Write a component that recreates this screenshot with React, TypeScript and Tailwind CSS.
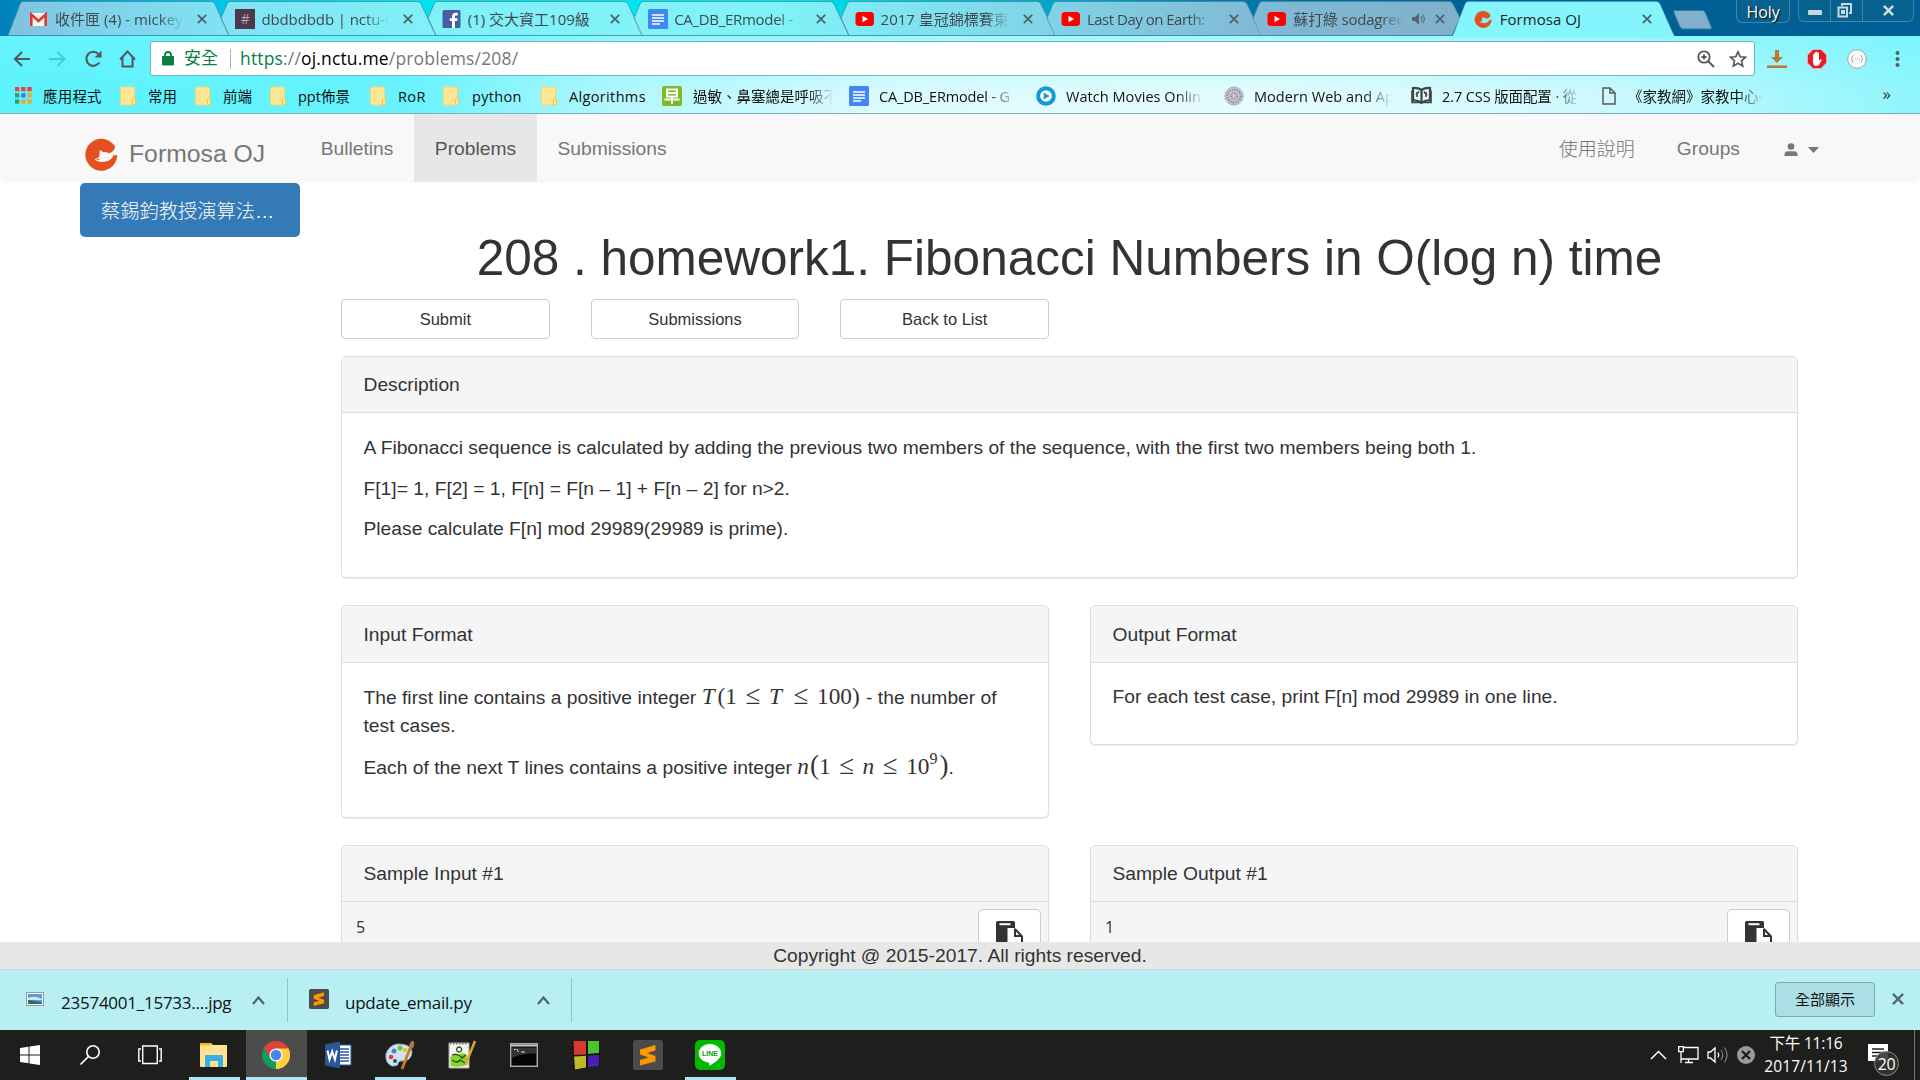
import React from 'react';

const UI = "font-['Open_Sans','Noto_Sans_CJK_TC',sans-serif]";

/* ---------- small drawings ---------- */

const YouTube = () => (
  <svg width="20" height="20" viewBox="0 0 20 20"><rect x="0.5" y="3" width="18.5" height="14" rx="3.5" fill="#f00" /><path d="M7.5 6.8v6.4l5.5-3.2z" fill="#fff" /></svg>
);
const Docs = () => (
  <svg width="20" height="20" viewBox="0 0 20 20"><rect width="20" height="20" rx="1.5" fill="#4285f4" /><path d="M4 6h12M4 9h12M4 12h12M4 15h8" stroke="#fff" strokeWidth="1.4" /></svg>
);
const Gmail = () => (
  <svg width="20" height="20" viewBox="0 0 20 20"><rect x="1" y="4" width="17" height="13" rx="1" fill="#f4f4f4" /><path d="M2.3 17V5.5L9.5 12l7.2-6.500V17" fill="none" stroke="#e0392b" strokeWidth="2.6" /></svg>
);
const Slack = () => (
  <span className="flex size-5 items-center justify-center bg-[#4d394b] text-[14px] leading-5 text-[#b9a5b7]">#</span>
);
const Facebook = () => (
  <svg width="20" height="20" viewBox="0 0 20 20"><rect x="0.500" y="1" width="18" height="18" rx="1.500" fill="#4460a0" /><path d="M10 19v-7H7.700V9.200H10V7.300C10 4.900 11.500 3.700 13.700 3.700h2v2.800h-1.400c-1.100 0-1.400.5-1.400 1.300v1.400h2.700l-.4 2.800h-2.300V19z" fill="#fff" /></svg>
);
const Formosa = ({ size }: { size: number }) => (
  <svg width={size} height={size} viewBox="0 0 34 34">
    <path d="M31 9.500A16 16 0 1 0 33.300 18.300L29.500 18.300C28 22.500 23.500 25 18.500 25c-4-.2-7-1.500-8-2.800 1.500-.4 3.500-1 4.500-2.200.8-1.500.3-3.500 1-7 1.200.5 2.500 1.800 3.700 2.200l2.800-.2c1 .8 2 1.500 3.500 1C28.500 15 31 12.500 31 9.500z" fill="#e2511f" />
    <path d="M11 21.500c2 .8 4 .6 5.500-.3-1 1.800-3 2.500-5.500.3z" fill="#e2511f" />
  </svg>
);
const Folder = () => (
  <svg width="17" height="20" viewBox="0 0 17 20"><path d="M1.500 1h12a1 1 0 0 1 1 1v16a1 1 0 0 1-1 1h-12a1 1 0 0 1-1-1V2a1 1 0 0 1 1-1z" fill="#ffe694" stroke="#f3d678" /><path d="M12.500 18.500v-5.500l1.500-1.200 1.500 1.200v4.500q0 1-1 1z" fill="#ffe694" stroke="#eec64c" /></svg>
);
const Apps = () => (
  <svg width="17" height="17" viewBox="0 0 17 17">
    {['#ea4335', '#ea4335', '#ea4335', '#34a060', '#2f80ed', '#f4a825', '#34a060', '#f4a825', '#f4a825'].map((c, i) => (
      <rect key={i} x={(i % 3) * 6.200} y={Math.floor(i / 3) * 6.200} width="4.300" height="4.300" fill={c} />
    ))}
  </svg>
);
const Zao = () => (
  <svg width="20" height="20" viewBox="0 0 20 20"><rect width="20" height="20" rx="2" fill="#7fb927" /><path d="M5 3.500h10v7H5zM5 7h10M2.500 13.500h15M10 10.500V18" fill="none" stroke="#fff" strokeWidth="2" /></svg>
);
const Watch = () => (
  <svg width="20" height="20" viewBox="0 0 20 20"><circle cx="10" cy="10" r="7.800" fill="#fff" stroke="#1598d6" strokeWidth="4" /><path d="M7.700 6.500v7l6-3.500z" fill="#1598d6" /></svg>
);
const Seal = () => (
  <svg width="20" height="20" viewBox="0 0 20 20" fill="none" stroke="#8e8a9c"><circle cx="10" cy="10" r="9" fill="#c9c6d3" strokeDasharray="2 1" /><circle cx="10" cy="10" r="6.500" strokeWidth="2" strokeDasharray="1.500 1" /><circle cx="10" cy="10" r="3" strokeWidth="2" strokeDasharray="1 1" /></svg>
);
const Book = () => (
  <svg width="21" height="20" viewBox="0 0 21 20" fill="none" stroke="#444" strokeWidth="2.200"><path d="M10.500 4Q7 1.500 2 2v12.500q5-.5 8.500 2.500 3.500-3 8.500-2.500V2q-5-.5-8.500 2zM10.500 4v13" /><path d="M1 4.500v12h8M20 4.500v12h-8M6 6v5M8 5.500 5 9M15 6v5M13 5.500l3 4" strokeWidth="1.600" /></svg>
);
const Page = () => (
  <svg width="14" height="18" viewBox="0 0 14 18" fill="none" stroke="#5a5a5a" strokeWidth="1.500"><path d="M1 1h7l5 5v11H1zM8 1v5h5" /></svg>
);
const Cross = ({ size, color, width = 1.700 }: { size: number; color: string; width?: number }) => (
  <svg width={size} height={size} viewBox="0 0 10 10"><path d="M.8.8l8.400 8.400M9.200.8.8 9.200" stroke={color} strokeWidth={width} /></svg>
);
const Chevron = ({ w, h, color, sw }: { w: number; h: number; color: string; sw: number }) => (
  <svg width={w} height={h} viewBox={`0 0 ${w} ${h}`}><path d={`M1 ${h - 1}L${w / 2} 1.500 ${w - 1} ${h - 1}`} fill="none" stroke={color} strokeWidth={sw} /></svg>
);
const Sublime = ({ size }: { size: number }) => (
  <svg width={size} height={size} viewBox="0 0 30 30"><rect width="30" height="30" rx="2.500" fill="#4b4b4b" /><path d="M7 9.500 22.500 5v5.500L14 13l8.500 3v5.500L7 25.500V20l8.500-2.500L7 14.500z" fill="#ff9800" /></svg>
);

/* ---------- tab strip ---------- */

const fade = '[mask-image:linear-gradient(to_right,#000_78%,transparent_98%)]';

const tabs = [
  { icon: <Gmail />, text: '收件匣 (4) - mickey', cls: 'tracking-[0px]' },
  { icon: <Slack />, text: 'dbdbdbdb | nctu-c', cls: 'tracking-[-0.1px]' },
  { icon: <Facebook />, text: '(1) 交大資工109級', cls: 'tracking-[0px]' },
  { icon: <Docs />, text: 'CA_DB_ERmodel -', cls: 'tracking-[-0.3px]' },
  { icon: <YouTube />, text: '2017 皇冠錦標賽東', cls: 'tracking-[0px]' },
  { icon: <YouTube />, text: 'Last Day on Earth:', cls: 'tracking-[-0.5px]' },
  { icon: <YouTube />, text: '蘇打綠 sodagree', cls: 'tracking-[-0.2px]', audio: true },
  { icon: <Formosa size={18} />, text: 'Formosa OJ', cls: 'tracking-[0.05px]', active: true },
];

function tabPath(i: number) {
  if (i === 0 || i === 7) return 'M0 35.500 L12 4 Q13 1.500 15 1.500 H203 Q206 1.500 207 4 L221 35.500 Z';
  if (i === 6) return 'M7 18 L13 4 Q14 1.500 16 1.500 H203 Q206 1.500 207 4 L214 18 L206 35.500 H15 Z';
  return 'M7 18 L13 4 Q14 1.500 16 1.500 H203 Q206 1.500 207 4 L222 35.500 H15 Z';
}

function TabStrip() {
  return (
    <div className="flex h-9 bg-[linear-gradient(to_right,#0080bb_0,#009fd2_80px,#00c4e8_220px,#00e2f0_420px,#00e6f0_780px,#00c8e2_900px,#00a0c8_1080px,#0073a8_1260px,#006298_1460px,#005f94_100%)] pl-2">
      {tabs.map((t, i) => (
        <div key={i} className="relative h-9 w-[206.4px] shrink-0">
          <svg className="absolute left-0 top-0 overflow-visible" width="222" height="36" viewBox="0 0 222 36">
            <path d={tabPath(i)} fill={t.active ? '#84f5fd' : '#ffffff'} fillOpacity={t.active ? 1 : 0.5} stroke="#3f8799" strokeOpacity={t.active ? 0.3 : 0.75} />
            {t.active && <path d="M0 34h221v3H0z" fill="#84f5fd" />}
          </svg>
          <div className="relative flex h-9 items-center pl-[21px] pt-px">
            <span className="flex w-[26px] shrink-0 pt-px">{t.icon}</span>
            <span className={`shrink-0 overflow-hidden whitespace-nowrap text-[15px] leading-6 ${t.audio ? 'w-[113px]' : 'w-[132px]'} ${t.active ? 'text-[#222]' : 'text-[#3f4a50]'} ${t.active || i === 2 ? '' : fade} ${t.cls}`}>{t.text}</span>
            {t.audio && (
              <svg className="ml-1.5 shrink-0" width="14" height="12" viewBox="0 0 14 12"><path d="M0 4h3l4-4v12L3 8H0z" fill="#55666f" /><path d="M9 3q2 3 0 6M11 1.500q3 4.500 0 9" stroke="#55666f" fill="none" /></svg>
            )}
            <span className={t.audio ? 'ml-[9px] pt-px' : 'ml-[10px] pt-px'}><Cross size={10} color="#4c6068" /></span>
          </div>
        </div>
      ))}
      <svg className="ml-[13px] mt-2.5 shrink-0" width="42" height="20" viewBox="0 0 42 20"><path d="M3 .5h27q2.500 0 3.300 2l6.200 15q.7 1.500-1.500 1.500H11q-2 0-3-2L2 3Q1 .5 3 .5z" fill="#82afc9" stroke="#35799c" /></svg>
      <div className="ml-[22px] flex h-[23px] w-[54px] items-center justify-center rounded-b-md border border-t-0 border-[#3f86ad] bg-[#07618f] text-[16px] leading-5 text-white [text-shadow:1px_1px_1px_#000]">
        <span className="pt-0.5">Holy</span>
      </div>
      <div className="ml-2 flex h-[22px] w-[116px] rounded-b-md border border-t-0 border-[#3f86ad] bg-[#07618f]">
        <span className="flex w-8 items-center justify-center border-r border-[#3f86ad] pt-1"><span className="h-[5px] w-3.5 rounded-[1px] bg-[#c4d6e0]" /></span>
        <span className="flex w-8 items-center justify-center border-r border-[#3f86ad] pr-1">
          <svg width="15" height="15" viewBox="0 0 15 15" fill="none" stroke="#c9d9e2" strokeWidth="2"><path d="M5 3V1h9v9h-2" /><path d="M1.500 4.500h8.500v9H1.500zM5 8h2v2H5z" /></svg>
        </span>
        <span className="flex flex-1 items-center justify-center"><Cross size={11} color="#cfdde5" width={2.200} /></span>
      </div>
    </div>
  );
}

/* ---------- toolbar and bookmarks ---------- */

const bookmarks = [
  { icon: <Apps />, iw: 'w-7', w: 'w-[77px]', text: '應用程式', cls: 'tracking-[0.2px]' },
  { icon: <Folder />, iw: 'w-7', w: 'w-[47px]', text: '常用', cls: '' },
  { icon: <Folder />, iw: 'w-7', w: 'w-[47px]', text: '前端', cls: '' },
  { icon: <Folder />, iw: 'w-7', w: 'w-[72px]', text: 'ppt佈景', cls: '' },
  { icon: <Folder />, iw: 'w-7', w: 'w-[45px]', text: 'RoR', cls: 'tracking-[0.4px]' },
  { icon: <Folder />, iw: 'w-[29px]', w: 'w-[69px]', text: 'python', cls: 'tracking-[0.3px]' },
  { icon: <Folder />, iw: 'w-7', w: 'w-[93px]', text: 'Algorithms', cls: 'tracking-[0.35px]' },
  { icon: <Zao />, iw: 'w-[31px]', w: 'w-[146px] mr-[10px]', text: '過敏、鼻塞總是呼吸不', cls: '[mask-image:linear-gradient(to_right,#000_78%,transparent_96%)]' },
  { icon: <Docs />, iw: 'w-[30px]', w: 'w-[141px] mr-4', text: 'CA_DB_ERmodel - G', cls: `${fade} tracking-[-0.15px]` },
  { icon: <Watch />, iw: 'w-[30px]', w: 'w-[141px] mr-[17px]', text: 'Watch Movies Onlin', cls: `${fade} tracking-[0.05px]` },
  { icon: <Seal />, iw: 'w-[30px]', w: 'w-[141px] mr-4', text: 'Modern Web and Ap', cls: `${fade} tracking-[0.05px]` },
  { icon: <Book />, iw: 'w-[31px]', w: 'w-[142px] mr-[18px]', text: '2.7 CSS 版面配置 · 從', cls: `${fade} tracking-[-0.1px]` },
  { icon: <Page />, iw: 'w-[26px]', w: 'w-[140px]', text: '《家教網》家教中心-', cls: fade },
];

function Toolbar() {
  return (
    <div className="h-[78px] border-b border-[#7fb0b8] bg-[linear-gradient(to_bottom,rgba(110,244,254,0.55),rgba(255,255,255,0)_75%),linear-gradient(to_right,#5cf3fd_0,#66f3fd_400px,#b4f7fd_620px,#dcfbfe_900px,#e6fcfe_1250px,#cdf9fe_1600px,#8ff5fd_1920px)]">
      <div className="flex h-[45px] items-center pl-[13px]">
        <svg width="18" height="16" viewBox="0 0 18 16" fill="none" stroke="#4f5b5e" strokeWidth="2.100"><path d="M17 8H2M9 1 2 8l7 7" /></svg>
        <svg className="ml-[18px]" width="18" height="16" viewBox="0 0 18 16" fill="none" stroke="#35d0dc" strokeWidth="1.800"><path d="M0 8h15.500M8.500 1l7 7-7 7" /></svg>
        <svg className="ml-[17px]" width="19" height="18" viewBox="0 0 19 18" fill="none" stroke="#4f5b5e" strokeWidth="2.200"><path d="M15.300 12.500A7 7 0 1 1 14.500 4" /><path d="M17.500.5v7h-7z" fill="#4f5b5e" stroke="none" /></svg>
        <svg className="ml-4" width="17" height="18" viewBox="0 0 17 18" fill="none" stroke="#4f5b5e" strokeWidth="2"><path d="M1 9.500 8.500 1.500 16 9.500M3.500 7.500V16.500h10V7.500" /></svg>
        <div className="ml-[14px] flex h-[35px] w-[1605px] shrink-0 items-center rounded-[3px] border border-[#6fb5c0] bg-white pl-[11px]">
          <svg className="shrink-0" width="12" height="15" viewBox="0 0 12 15"><rect x="0" y="5" width="12" height="9.500" rx="1" fill="#0b8043" /><path d="M3 6V4q0-3 3-3t3 3v2" fill="none" stroke="#0b8043" strokeWidth="1.800" /></svg>
          <span className="-mt-0.5 ml-[10px] text-[17px] leading-6 text-[#0b8043]">安全</span>
          <span className="ml-[12px] h-5 w-px bg-[#b0b0b0]" />
          <span className="-mt-0.5 ml-[9px] text-[17.5px] leading-6 tracking-[0.16px] text-[#777]"><span className="text-[#0b8043]">https</span>://<span className="text-black">oj.nctu.me</span>/problems/208/</span>
          <svg className="ml-auto shrink-0" width="18" height="18" viewBox="0 0 18 18" fill="none" stroke="#555" strokeWidth="1.800"><circle cx="7" cy="7" r="5.700" /><path d="M11 11l6 6M4.500 7h5M7 4.500v5" /></svg>
          <svg className="ml-[14px] mr-[7px] shrink-0" width="18" height="18" viewBox="0 0 18 18" fill="none" stroke="#555" strokeWidth="1.600"><path d="M9 1.800l2.200 4.900 5.300.5-4 3.600 1.200 5.300L9 13.300l-4.700 2.800 1.200-5.300-4-3.600 5.300-.5z" /></svg>
        </div>
        <svg className="ml-3" width="20" height="18" viewBox="0 0 20 18" fill="#b97a2f"><path d="M8 0h4v7h4l-6 6-6-6h4zM0 15.500h20V18H0z" /></svg>
        <svg className="ml-[20px]" width="20" height="20" viewBox="0 0 20 20"><path d="M6 .5h8L19.500 6v8L14 19.500H6L.5 14V6z" fill="#e11d22" stroke="#f6a9ab" /><path d="M6 10V5.500q1-1 1.500 0V9V3.500q1-1 1.500 0V9V3q1-1 1.500 0v6V4q1-1 1.500 0v7.500l1.800-1.200q1.200 0 .7 1.200L12 16q-1 1-3.500 1Q6 16.500 6 13z" fill="#fff" /></svg>
        <svg className="ml-5" width="20" height="20" viewBox="0 0 20 20" fill="none" stroke="#9aa5a8"><circle cx="10" cy="10" r="9.300" fill="#fbfbfb" /><path d="M6.500 6.500q-1.500 0-1.300 1.500 0 2-1.200 2 1.200 0 1.200 2-.2 1.500 1.300 1.500M13.500 6.500q1.500 0 1.300 1.500 0 2 1.200 2-1.200 0-1.200 2 .2 1.500-1.300 1.500M7.500 10h1M9.700 10h1M12 10h1" /></svg>
        <svg className="ml-7" width="5" height="16" viewBox="0 0 5 16" fill="#4f6366"><circle cx="2.500" cy="2" r="2" /><circle cx="2.500" cy="8" r="2" /><circle cx="2.500" cy="14" r="2" /></svg>
      </div>
      <div className="-mt-px flex h-[31px] items-center pl-[15px] text-[14.5px] leading-6 text-[#111]">
        {bookmarks.map((b, i) => (
          <React.Fragment key={i}>
            <span className={`flex shrink-0 ${b.iw}`}>{b.icon}</span>
            <span className={`shrink-0 overflow-hidden whitespace-nowrap pt-0.5 ${b.w} ${b.cls}`}>{b.text}</span>
          </React.Fragment>
        ))}
        <span className="-mt-1 ml-auto mr-[29px] text-[17px] leading-5 text-[#333]">»</span>
      </div>
    </div>
  );
}

/* ---------- page ---------- */

function Navbar() {
  return (
    <nav className="flex h-[69px] shrink-0 rounded-b-md bg-[#f8f8f8] pl-[84px] text-[#777]">
      <div className="flex w-[216px] items-start pt-[23px]">
        <Formosa size={34} />
        <span className="ml-[11px] pt-px text-[24.75px] leading-[31px]">Formosa OJ</span>
      </div>
      <span className="h-[68px] px-[20.7px] pt-[21px] leading-[28px]">Bulletins</span>
      <span className="h-[68px] bg-[#e7e7e7] px-[20.7px] pt-[21px] leading-[28px] text-[#555]">Problems</span>
      <span className="h-[68px] px-[20.7px] pt-[21px] leading-[28px]">Submissions</span>
      <div className="ml-auto mr-[101px] flex pt-[21px] leading-[28px]">
        <span className="mr-[42px] pt-px text-[19px] font-light">使用說明</span>
        <span className="mr-[44px]">Groups</span>
        <svg className="mt-[8px]" width="14" height="14" viewBox="0 0 14 14" fill="#777"><circle cx="7" cy="3.500" r="3.300" /><path d="M.5 13v-1.500Q.5 8.500 4 8.300h6q3.500.2 3.500 3.200V13z" /></svg>
        <svg className="ml-2.5 mt-[12px]" width="11" height="7" viewBox="0 0 11 7" fill="#777"><path d="M0 0h11L5.500 6z" /></svg>
      </div>
    </nav>
  );
}

function Panel({ title, className, head, children }: { title: string; className: string; head: string; children: React.ReactNode }) {
  return (
    <section className={`rounded-[5px] border border-[#ddd] bg-white shadow-[0_1px_1px_rgba(0,0,0,0.08)] ${className}`}>
      <h2 className={`flex items-center rounded-t-[4px] border-b border-[#ddd] bg-[#f5f5f5] pl-[21.5px] pt-0.5 ${head}`}>{title}</h2>
      {children}
    </section>
  );
}

const Le = () => <span className="inline-block w-[32px] text-center text-[27px] leading-[20px]">≤</span>;
const mathCls = "inline-block whitespace-nowrap font-['Liberation_Serif',serif] text-[23.3px] leading-[20px]";

function Sample({ title, value }: { title: string; value: string }) {
  return (
    <Panel title={title} className="h-[140px] w-[708px]" head="h-[56px]">
      <div className="flex h-[84px] justify-between rounded-t-[4px] bg-[#f5f5f5] pl-[14px] pr-[7px] pt-[7px]">
        <span className="pt-[6px] font-['Open_Sans',sans-serif] text-[16px] leading-6">{value}</span>
        <span className="flex h-[48px] w-[63px] justify-center rounded-[5px] border border-[#ccc] bg-white pt-[11px]">
          <svg width="27" height="28" viewBox="0 0 27 28"><path d="M1.500 0h16q1.500 0 1.500 1.500V7h-7.500v19H0V1.500Q0 0 1.500 0z" fill="#333" /><path d="M3.500 2.200h11v2h-11z" fill="#fff" /><path d="M12.500 8h6.500l7 7.500V27H12.500z" fill="#fff" /><path d="M19 8l7 7.500V27M19 7.500v7.500h7" fill="none" stroke="#333" strokeWidth="2" /></svg>
        </span>
      </div>
    </Panel>
  );
}

function SitePage() {
  return (
    <div className="flex h-[828px] flex-col overflow-hidden bg-white font-['Liberation_Sans','Noto_Sans_CJK_TC',sans-serif] text-[19.26px] text-[#333]">
      <Navbar />
      <main className="flex pl-20">
        <aside className="w-[261px] shrink-0">
          <div className="flex h-[54px] w-[220px] items-center rounded-[5px] bg-[#337ab7] pl-[21px] pt-1 font-light text-white">
            <span className="w-[180px] overflow-hidden text-ellipsis whitespace-nowrap">蔡錫鈞教授演算法…</span>
          </div>
        </aside>
        <div className="w-[1457px]">
          <h1 className="mt-[47px] text-center text-[49.5px] leading-[56px]">208 . homework1. Fibonacci Numbers in O(log n) time</h1>
          <div className="mt-[13px] flex gap-[41px] text-[16.5px]">
            {['Submit', 'Submissions', 'Back to List'].map((t) => (
              <button key={t} className="flex h-10 w-[208.7px] items-center justify-center rounded-[4px] border border-[#ccc] bg-white">{t}</button>
            ))}
          </div>
          <Panel title="Description" className="mt-[17px] h-[222px]" head="h-[56px]">
            <div className="flex flex-col gap-[12.5px] pl-[21.5px] pt-[21px] leading-[28px]">
              <p>A Fibonacci sequence is calculated by adding the previous two members of the sequence, with the first two members being both 1.</p>
              <p>F[1]= 1, F[2] = 1, F[n] = F[n – 1] + F[n – 2] for n&gt;2.</p>
              <p>Please calculate F[n] mod 29989(29989 is prime).</p>
            </div>
          </Panel>
          <div className="mt-[27px] flex items-start justify-between">
            <Panel title="Input Format" className="h-[213px] w-[708px]" head="h-[57px]">
              <div className="pl-[21.5px] pt-[21px] leading-[28px]">
                <p>The first line contains a positive integer <span className={mathCls}><i className="mr-[3px]">T</i>(1<Le /><i>T</i><span className="ml-[3px]"><Le /></span>100)</span> <span className="ml-px">- the number of</span><br />test cases.</p>
                <p className="mt-[14px]">Each of the next T lines contains a positive integer <span className={mathCls}><i className="mr-px">n</i><span className="text-[27px]">(</span>1<Le /><i>n</i><Le />10<sup className="top-[-10px] text-[16px]">9</sup><span className="ml-0.5 text-[27px]">)</span></span>.</p>
              </div>
            </Panel>
            <Panel title="Output Format" className="h-[140px] w-[708px]" head="h-[57px]">
              <p className="pl-[21.5px] pt-[20px] leading-[28px]">For each test case, print F[n] mod 29989 in one line.</p>
            </Panel>
          </div>
          <div className="mt-[27px] flex justify-between">
            <Sample title="Sample Input #1" value="5" />
            <Sample title="Sample Output #1" value="1" />
          </div>
        </div>
      </main>
    </div>
  );
}

/* ---------- downloads and taskbar ---------- */

function Downloads() {
  return (
    <div className="flex h-[60px] items-center bg-[#b7eff3] text-[#111]">
      <div className="flex h-11 w-[288px] items-center border-r border-[#8fc4c9] pl-[26px]">
        <svg className="-mt-0.5" width="18" height="14" viewBox="0 0 18 14"><rect x=".5" y=".5" width="17" height="13" fill="#fff" stroke="#8e9ba3" /><rect x="2" y="2" width="14" height="10" fill="#5b9bdc" /><path d="M2 6q6-3 14 1v1H2z" fill="#cfe6f7" /><path d="M2 8q4 0 14 2.500V12H2z" fill="#2f6b6a" /></svg>
        <span className="ml-[17px] w-[191px] pt-1.5 text-[17px] tracking-[-0.25px]">23574001_15733....jpg</span>
        <Chevron w={13} h={9} color="#4f6669" sw={2.200} />
      </div>
      <div className="flex h-11 w-[284px] items-center border-r border-[#8fc4c9] pl-[21px]">
        <span className="-mt-0.5"><Sublime size={20} /></span>
        <span className="ml-4 w-[192px] pt-1.5 text-[17px] tracking-[-0.25px]">update_email.py</span>
        <Chevron w={13} h={9} color="#4f6669" sw={2.200} />
      </div>
      <button className="-mt-0.5 ml-auto mr-[17px] flex h-[35px] w-[100px] items-center justify-center rounded-[3px] border border-[#7ba9ae] bg-[#abdfe5] text-[15px]">全部顯示</button>
      <span className="-mt-0.5 mr-4"><Cross size={12} color="#56696c" width={2} /></span>
    </div>
  );
}

const pinned = [
  { line: true, icon: <svg width="30" height="26" viewBox="0 0 30 26"><path d="M1 2q0-1 1-1h10l2 2h14v21q0 1-1 1H2q-1 0-1-1z" fill="#ffe391" /><path d="M1 2q0-1 1-1h10l1 2.500H1z" fill="#f3b81f" /><path d="M6 25V14q0-1 1-1h16q1 0 1 1v11h-5v-6h-8v6z" fill="#37b0e6" /></svg> },
  { line: true, active: true, icon: <svg width="28" height="28" viewBox="0 0 28 28"><path d="M14 14 1.900 7A14 14 0 0 1 26.100 7z" fill="#db4437" /><path d="M14 14 14 28A14 14 0 0 1 1.900 7z" fill="#0f9d58" /><path d="M14 14 26.100 7A14 14 0 0 1 14 28z" fill="#ffcd40" /><path d="M14 7.500h12.400L26.100 7A14 14 0 0 0 1.900 7l6.500 10.300z" fill="#db4437" /><path d="M19.600 17.300 13.400 28h.6A14 14 0 0 0 26.400 7.500H14z" fill="#ffcd40" /><circle cx="14" cy="14" r="6.600" fill="#f5f5f5" /><circle cx="14" cy="14" r="5.200" fill="#4285f4" /></svg> },
  { icon: <svg width="28" height="28" viewBox="0 0 28 28"><rect x="13" y="4" width="14" height="20" fill="#fff" stroke="#2b579a" /><path d="M16 8h9M16 11h9M16 14h9M16 17h9M16 20h9" stroke="#2b579a" strokeWidth="1.500" /><path d="M1 3.500 16 .5v27L1 24.500z" fill="#2b579a" /><path d="M3.500 9.500l2 9 2.700-8 2.700 8 2-9" fill="none" stroke="#fff" strokeWidth="2" /></svg> },
  { line: true, icon: <svg width="30" height="30" viewBox="0 0 30 30"><path d="M13 4q-9 1-12 10-1 9 6 12 7 0 6-3 1-3 5-2 8 0 9-9Q26 4 13 4z" fill="#cfe3f1" stroke="#8fb2cb" /><circle cx="9" cy="11" r="2.500" fill="#3b8ad8" /><circle cx="15" cy="8" r="2.500" fill="#74bd3c" /><circle cx="6" cy="17" r="2.300" fill="#df3b2f" /><circle cx="20" cy="10" r="2" fill="#f1b52b" /><circle cx="10" cy="21" r="2" fill="#2d4d63" /><path d="M26 6 17 29" stroke="#d07a23" strokeWidth="2.800" /><path d="M24 7q0-5 4-6.500Q31 4 27.500 8.500z" fill="#a97945" /></svg> },
  { icon: <svg width="30" height="30" viewBox="0 0 30 30"><path d="M2 3h20v25H2z" fill="#f3f3f0" stroke="#aaa" /><path d="M3 3.500h18" stroke="#777" strokeWidth="2" strokeDasharray="1.500 1.500" /><path d="M3.500 17q4-5 8-2 5-4 8 0l1 10q-9 3-17 1z" fill="#86d52a" /><path d="M5 15q6-2 10 3l4-3M5 20q5 4 8 0l5 3M12 12a2.500 2.500 0 1 1 .1 0" fill="none" stroke="#234d12" strokeWidth="1.300" /><path d="M28 1 20 21l-1 4" stroke="#e2a528" strokeWidth="2.500" fill="none" /></svg> },
  { icon: <svg width="28" height="24" viewBox="0 0 28 24"><rect x=".7" y=".7" width="26.600" height="22.600" fill="#050505" stroke="#a8acb0" strokeWidth="1.500" /><path d="M1 2.500h26" stroke="#c5c9cd" strokeWidth="2" /><path d="M2 4.500h24v6Q12 10 2 15z" fill="#333" /><path d="M4 6.500h2M7 6l1.500 3M11 9h4" stroke="#ddd" /></svg> },
  { icon: <svg width="28" height="30" viewBox="0 0 28 30"><path d="M0 1l1.500-1L27.500 1v25L3 30 1.500 28z" fill="#111" /><path d="M1.500.8 14 1v13.500L2 15z" fill="#d63a2e" /><path d="M16 1h11v12l-11 1z" fill="#4cc22e" /><path d="M2 16.500l12-.8v11.800L3 29.500z" fill="#bfb72e" /><path d="M16 15.500l11-.5v11l-11 1.500z" fill="#4a1fb0" /></svg> },
  { icon: <Sublime size={30} /> },
  { line: true, icon: <span className="relative flex size-[30px] items-center justify-center rounded-[5px] bg-[#00b900]"><svg className="absolute" width="30" height="30" viewBox="0 0 30 30"><path d="M15 4C8.500 4 3.700 8.300 3.700 13.400c0 4.600 4.300 8.400 10 9.200.8.200.5 1.500.4 3.200 4-2.200 12.200-6.800 12.200-12.400C26.300 8.300 21.500 4 15 4z" fill="#fff" /></svg><span className="relative -mt-[3px] font-['Liberation_Sans',sans-serif] text-[7px] font-bold leading-none text-[#00a000]">LINE</span></span> },
];

function Taskbar() {
  return (
    <div className="flex h-[50px] bg-[#1e1e1d] text-white">
      <span className="flex w-[60px] items-center justify-center"><svg width="20" height="20" viewBox="0 0 20 20" fill="#fff"><path d="M0 3l8.500-1.200v7.700H0zM9.500 1.600 20 0v9.500H9.500zM0 10.500h8.500v7.700L0 17zM9.500 10.500H20V20L9.500 18.400z" /></svg></span>
      <span className="flex w-[60px] items-center justify-center"><svg width="20" height="20" viewBox="0 0 20 20" fill="none" stroke="#fff" strokeWidth="1.600"><circle cx="13" cy="7" r="6.200" /><path d="M8.500 11.500.5 19.500" /></svg></span>
      <span className="flex w-[63px] items-center justify-center pr-[3px]"><svg width="24" height="20" viewBox="0 0 24 20" fill="none" stroke="#fff" strokeWidth="1.400"><path d="M4.700 1h14.600v17.500H4.700zM3 4H.8v12H3M21 4h2.200v12H21" /></svg></span>
      {pinned.map((p, i) => (
        <span key={i} className="flex w-[62px] flex-col items-center">
          <span className={`flex h-[47px] items-center justify-center pt-0.5 ${p.active ? 'w-[61px] bg-[#4c4c4b]' : 'w-[51px]'}`}>{p.icon}</span>
          <span className={`h-[3px] ${p.active ? 'w-[61px]' : 'w-[51px]'} ${p.line ? 'bg-[#a9e6fb]' : ''}`} />
        </span>
      ))}
      <div className="ml-auto flex items-center">
        <Chevron w={17} h={10} color="#fff" sw={1.500} />
        <svg className="ml-[11px]" width="21" height="18" viewBox="0 0 21 18" fill="none" stroke="#fff" strokeWidth="1.300"><path d="M5 1.500h15v11.500H3V7M10.500 13v3.500M7 16.500h8M.7.7h4.600v5H.7zM3 6v11" /></svg>
        <svg className="ml-[8px]" width="22" height="18" viewBox="0 0 22 18" fill="none" stroke="#fff" strokeWidth="1.300"><path d="M1 6h2.500L8 2v14l-4.500-4H1z" /><path d="M11 6.500q1.500 2.500 0 5" /><path d="M14 4q3.500 5 0 10M17.500 1.500q5 7.500 0 15" stroke="#777" /></svg>
        <svg className="ml-2" width="18" height="18" viewBox="0 0 18 18"><circle cx="9" cy="9" r="9" fill="#9a9a9a" /><path d="M5 5l8 8M13 5l-8 8" stroke="#1b1b1b" strokeWidth="2.200" /></svg>
        <div className="ml-[8px] flex w-[86px] flex-col items-center text-[15.5px] leading-[23px]">
          <span className="tracking-[-0.2px]">下午 11:16</span>
          <span className="tracking-[0.1px]">2017/11/13</span>
        </div>
        <span className="relative ml-[19px] h-[40px] w-[46px]">
          <svg className="absolute left-0 top-[9px]" width="20" height="20" viewBox="0 0 20 20"><path d="M0 0h20v17H4l-2 0-2 0z" fill="#fff" /><path d="M4 5h12M4 8.500h12M4 12h8" stroke="#1e1e1d" strokeWidth="1.300" /></svg>
          <span className="absolute left-[6px] top-[16px] flex size-[25px] items-center justify-center rounded-full border border-[#8b8b8b] bg-[#333]/90 text-[16px] leading-none tracking-[-0.5px]">20</span>
        </span>
        <span className="h-full w-[6px] border-l border-[#777]" />
      </div>
    </div>
  );
}

export default function App() {
  return (
    <div className={`flex h-[1080px] w-[1920px] flex-col overflow-hidden bg-white ${UI}`}>
      <TabStrip />
      <Toolbar />
      <SitePage />
      <footer className="flex h-7 shrink-0 items-center justify-center border-b border-[#d2d2d2] bg-[#e7e7e7] font-['Liberation_Sans',sans-serif] text-[19.25px] leading-7 text-[#333]">Copyright @ 2015-2017. All rights reserved.</footer>
      <Downloads />
      <Taskbar />
    </div>
  );
}
